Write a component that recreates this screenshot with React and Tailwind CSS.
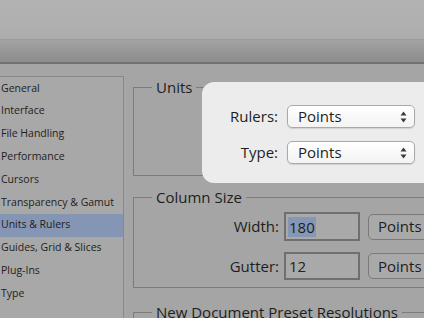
import React from "react";

const items = [
  "General",
  "Interface",
  "File Handling",
  "Performance",
  "Cursors",
  "Transparency & Gamut",
  "Units & Rulers",
  "Guides, Grid & Slices",
  "Plug-Ins",
  "Type",
];

function Arrows() {
  return (
    <svg width="7" height="12" viewBox="0 0 7 12" className="block">
      <path d="M3.5 0.5 L6.5 4.5 L0.5 4.5 Z" fill="#3a3a3a" />
      <path d="M0.5 7.5 L6.5 7.5 L3.5 11.5 Z" fill="#3a3a3a" />
    </svg>
  );
}

function Select() {
  return (
    <div className="relative flex h-[23px] w-[128px] items-center rounded-[5px] border border-[#a9a9a9] bg-gradient-to-b from-[#ffffff] to-[#f3f3f3] pl-[10px] shadow-[0_1px_1px_rgba(0,0,0,0.12)]">
      <span className="leading-none">Points</span>
      <div className="absolute right-[7px] top-[5px]">
        <Arrows />
      </div>
    </div>
  );
}

export default function App() {
  return (
    <div
      className="relative h-[318px] w-[424px] overflow-hidden bg-[#a5a5a5] text-[#1e1e1e]"
      style={{ fontFamily: '"Open Sans", "Noto Sans", sans-serif' }}
    >
      {/* title bar */}
      <div className="h-[64px]">
        <div className="h-[39px] bg-gradient-to-b from-[#b3b3b3] to-[#adadad]" />
        <div className="h-[1px] bg-[#9b9b9b]" />
        <div className="h-[22px] bg-gradient-to-b from-[#a3a3a3] to-[#8c8c8c]" />
        <div className="h-[2px] bg-[#717171]" />
      </div>

      <div className="flex">
        {/* sidebar */}
        <div className="mt-[12px] h-[260px] w-[124px] shrink-0 border-r border-t border-[#888888] bg-[#a8a8a8]">
          {items.map((t) => (
            <div
              key={t}
              className={
                "flex h-[22.8px] items-center whitespace-nowrap pl-[1px] text-[10.5px] " +
                (t === "Units & Rulers" ? "bg-[#8496b3]" : "")
              }
            >
              {t}
            </div>
          ))}
        </div>

        {/* panel */}
        <div className="ml-[9px] flex w-[320px] shrink-0 flex-col text-[15px]">
          <fieldset className="mt-[14px] h-[98px] w-[320px] border border-[#7c7c7c]">
            <legend className="ml-[18px] px-[4px] leading-[18px]">Units</legend>
          </fieldset>

          <fieldset className="mt-[12px] h-[100px] w-[320px] border border-[#7c7c7c]">
            <legend className="ml-[18px] px-[4px] leading-[18px]">Column Size</legend>
            <div className="mt-[6px] flex flex-col gap-[11px]">
              <div className="flex items-center">
                <div className="w-[145px] text-right">Width:</div>
                <div className="ml-[5px] flex h-[29px] w-[76px] items-center border-2 border-[#6f6f6f] bg-[#a9a9a9] pl-[2px]">
                  <span className="bg-[#8597b5] px-[1px] leading-[20px]">180</span>
                </div>
                <div className="ml-[8px] flex h-[26px] w-[80px] items-center rounded-[5px] border border-[#7a7a7a] bg-[#a9a9a9] pl-[9px]">
                  Points
                </div>
              </div>
              <div className="flex items-center">
                <div className="w-[145px] text-right">Gutter:</div>
                <div className="ml-[5px] flex h-[28px] w-[76px] items-center border-2 border-[#6f6f6f] bg-[#a9a9a9] pl-[3px]">
                  <span className="leading-[20px] text-[#2a2208]">12</span>
                </div>
                <div className="ml-[8px] flex h-[26px] w-[80px] items-center rounded-[5px] border border-[#7a7a7a] bg-[#a9a9a9] pl-[9px]">
                  Points
                </div>
              </div>
            </div>
          </fieldset>

          <fieldset className="mt-[15px] h-[60px] w-[320px] border border-[#7c7c7c]">
            <legend className="ml-[18px] px-[4px] leading-[18px] whitespace-nowrap">
              New Document Preset Resolutions
            </legend>
          </fieldset>
        </div>
      </div>

      {/* spotlight overlay */}
      <div className="absolute left-[202px] top-[82px] h-[101px] w-[240px] rounded-[12px] bg-[#ececec] text-[15px]">
        <div className="mt-[23px] flex flex-col gap-[13px]">
          <div className="flex items-center">
            <div className="w-[76px] text-right">Rulers:</div>
            <div className="ml-[9px]">
              <Select />
            </div>
          </div>
          <div className="flex items-center">
            <div className="w-[76px] text-right">Type:</div>
            <div className="ml-[9px]">
              <Select />
            </div>
          </div>
        </div>
      </div>
    </div>
  );
}
